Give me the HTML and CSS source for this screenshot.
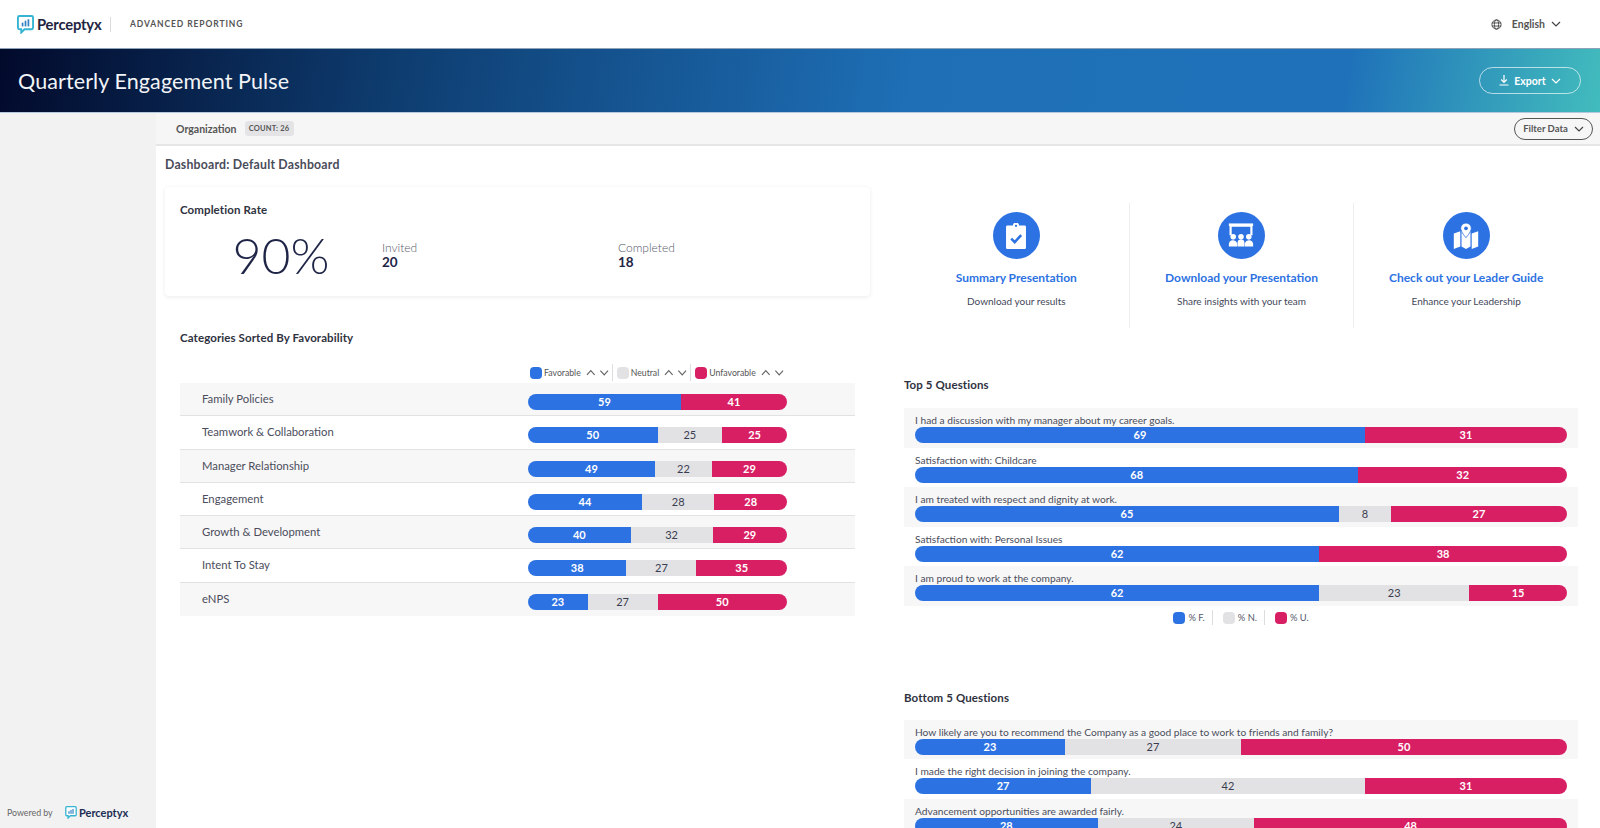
FILE: index.html
```html
<!DOCTYPE html>
<html lang="en">
<head>
<meta charset="utf-8">
<title>Quarterly Engagement Pulse</title>
<link rel="stylesheet" href="styles.css">
</head>
<body>
<header class="topbar">
  <div class="brand">
    <svg class="logo" viewBox="0 0 18 20"><path d="M2.500 1h13A1.500 1.500 0 0 1 17 2.500v11a1.500 1.500 0 0 1-1.500 1.500H8l-3.500 3.500V15h-2A1.500 1.500 0 0 1 1 13.500v-11A1.500 1.500 0 0 1 2.500 1z" fill="#fff" stroke="#35b5d3" stroke-width="2"/><rect x="5" y="8" width="1.800" height="4" fill="#2f7fc1"/><rect x="8.100" y="6" width="1.800" height="6" fill="#2f7fc1"/><rect x="11.200" y="4.500" width="1.800" height="7.500" fill="#2f7fc1"/></svg>
    <span class="brand-name">Perceptyx</span>
  </div>
  <span class="brand-rule"></span>
  <span class="product">ADVANCED REPORTING</span>
  <div class="lang">
    <svg class="globe" viewBox="0 0 12 12" fill="none" stroke="#444" stroke-width="1"><circle cx="6" cy="6" r="5"/><ellipse cx="6" cy="6" rx="2.300" ry="5"/><path d="M1 4.300h10M1 7.700h10"/></svg>
    <span>English</span>
    <svg class="chev" viewBox="0 0 10 6" fill="none" stroke="#444" stroke-width="1.200"><path d="M1 1l4 4 4-4"/></svg>
  </div>
</header>

<section class="banner">
  <h1>Quarterly Engagement Pulse</h1>
  <button class="export">
    <svg class="dl" viewBox="0 0 10 11" fill="none" stroke="#fff" stroke-width="1.200"><path d="M5 0v7M2.200 4.500L5 7.300l2.800-2.800M.5 10h9"/></svg>
    <span>Export</span>
    <svg class="chev" viewBox="0 0 10 6" fill="none" stroke="#fff" stroke-width="1.200"><path d="M1 1l4 4 4-4"/></svg>
  </button>
</section>

<div class="shell">
  <aside class="sidebar">
    <div class="powered">
      <span class="powered-by">Powered by</span>
      <svg class="logo-sm" viewBox="0 0 18 20"><path d="M2.500 1h13A1.500 1.500 0 0 1 17 2.500v11a1.500 1.500 0 0 1-1.500 1.500H8l-3.500 3.500V15h-2A1.500 1.500 0 0 1 1 13.500v-11A1.500 1.500 0 0 1 2.500 1z" fill="#fff" stroke="#35b5d3" stroke-width="2"/><rect x="5" y="8" width="1.800" height="4" fill="#2f7fc1"/><rect x="8.100" y="6" width="1.800" height="6" fill="#2f7fc1"/><rect x="11.200" y="4.500" width="1.800" height="7.500" fill="#2f7fc1"/></svg>
      <span class="powered-name">Perceptyx</span>
    </div>
  </aside>

  <main class="content">
    <div class="subbar">
      <span class="org">Organization</span>
      <span class="count">COUNT: 26</span>
      <button class="filter">
        <span>Filter Data</span>
        <svg class="chev" viewBox="0 0 10 6" fill="none" stroke="#444" stroke-width="1.200"><path d="M1 1l4 4 4-4"/></svg>
      </button>
    </div>

    <div class="dash">
      <div class="col-left">
        <h2 class="dash-title">Dashboard: Default Dashboard</h2>

        <section class="card">
          <h3 class="heading">Completion Rate</h3>
          <div class="rate">
            <div class="big">90%</div>
            <div class="stat"><span>Invited</span><strong>20</strong></div>
            <div class="stat"><span>Completed</span><strong>18</strong></div>
          </div>
        </section>

        <section class="cats">
          <h3 class="heading">Categories Sorted By Favorability</h3>
          <div class="sortbar">
            <i class="sw fav"></i><span class="sort-label">Favorable</span>
            <svg class="arrows" viewBox="0 0 24 7" fill="none" stroke="#666" stroke-width="1.200"><path d="M1 6l4-4.500L9 6M15 1.500L19 6l4-4.500"/></svg>
            <i class="sort-rule"></i>
            <i class="sw neu"></i><span class="sort-label">Neutral</span>
            <svg class="arrows" viewBox="0 0 24 7" fill="none" stroke="#666" stroke-width="1.200"><path d="M1 6l4-4.500L9 6M15 1.500L19 6l4-4.500"/></svg>
            <i class="sort-rule"></i>
            <i class="sw unf"></i><span class="sort-label">Unfavorable</span>
            <svg class="arrows" viewBox="0 0 24 7" fill="none" stroke="#666" stroke-width="1.200"><path d="M1 6l4-4.500L9 6M15 1.500L19 6l4-4.500"/></svg>
          </div>
          <div class="cat-row"><span class="cat-name">Family Policies</span><div class="bar cat-bar"><b class="fav" style="flex-grow:59">59</b><b class="unf" style="flex-grow:41">41</b></div></div>
          <div class="cat-row"><span class="cat-name">Teamwork &amp; Collaboration</span><div class="bar cat-bar"><b class="fav" style="flex-grow:50">50</b><b class="neu" style="flex-grow:25">25</b><b class="unf" style="flex-grow:25">25</b></div></div>
          <div class="cat-row"><span class="cat-name">Manager Relationship</span><div class="bar cat-bar"><b class="fav" style="flex-grow:49">49</b><b class="neu" style="flex-grow:22">22</b><b class="unf" style="flex-grow:29">29</b></div></div>
          <div class="cat-row"><span class="cat-name">Engagement</span><div class="bar cat-bar"><b class="fav" style="flex-grow:44">44</b><b class="neu" style="flex-grow:28">28</b><b class="unf" style="flex-grow:28">28</b></div></div>
          <div class="cat-row"><span class="cat-name">Growth &amp; Development</span><div class="bar cat-bar"><b class="fav" style="flex-grow:40">40</b><b class="neu" style="flex-grow:32">32</b><b class="unf" style="flex-grow:29">29</b></div></div>
          <div class="cat-row"><span class="cat-name">Intent To Stay</span><div class="bar cat-bar"><b class="fav" style="flex-grow:38">38</b><b class="neu" style="flex-grow:27">27</b><b class="unf" style="flex-grow:35">35</b></div></div>
          <div class="cat-row"><span class="cat-name">eNPS</span><div class="bar cat-bar"><b class="fav" style="flex-grow:23">23</b><b class="neu" style="flex-grow:27">27</b><b class="unf" style="flex-grow:50">50</b></div></div>
        </section>
      </div>

      <div class="col-right">
        <section class="links">
          <a class="link">
            <span class="disc"><svg viewBox="0 0 24 30"><path fill="#fff" d="M2 3h6.500a3.500 3.500 0 0 1 7 0H22a1.500 1.500 0 0 1 1.500 1.500v24A1.500 1.500 0 0 1 22 30H2a1.500 1.500 0 0 1-1.500-1.500v-24A1.500 1.500 0 0 1 2 3z"/><circle cx="12" cy="3.200" r="1.300" fill="#2d72e2"/><path d="M6.500 18l4 4 7.500-8" fill="none" stroke="#2d72e2" stroke-width="3"/></svg></span>
            <span class="link-title">Summary Presentation</span>
            <span class="link-sub">Download your results</span>
          </a>
          <a class="link">
            <span class="disc"><svg viewBox="0 0 30 30"><path d="M3 14V3h24v11" fill="none" stroke="#fff" stroke-width="2.500"/><path d="M1 2h28" stroke="#fff" stroke-width="3"/><g fill="#fff"><circle cx="6" cy="16" r="3.200"/><circle cx="15" cy="16" r="3.200"/><circle cx="24" cy="16" r="3.200"/><path d="M1 27v-3a5 5 0 0 1 9.500-1V27zM11 27v-4a4 4 0 0 1 8 0v4zM19.500 27v-4a5 5 0 0 1 9.500 1v3z"/></g></svg></span>
            <span class="link-title">Download your Presentation</span>
            <span class="link-sub">Share insights with your team</span>
          </a>
          <a class="link">
            <span class="disc"><svg viewBox="0 0 30 32"><path fill="#fff" d="M0 13l8-3v19l-8 3zM22 13l8-3v19l-8 3zM9.500 10l3 1 2.500 7 2.500-7 3-1v19l-5.500 3-5.500-3z"/><path fill="#fff" d="M15 0a6.500 6.500 0 0 1 6.500 6.500C21.500 11 15 18 15 18S8.500 11 8.500 6.500A6.500 6.500 0 0 1 15 0z" stroke="#2d72e2"/><circle cx="15" cy="6.500" r="2.300" fill="#2d72e2"/></svg></span>
            <span class="link-title">Check out your Leader Guide</span>
            <span class="link-sub">Enhance your Leadership</span>
          </a>
        </section>

        <section class="questions">
          <h3 class="heading">Top 5 Questions</h3>
          <div class="q-row"><p>I had a discussion with my manager about my career goals.</p><div class="bar"><b class="fav" style="flex-grow:69">69</b><b class="unf" style="flex-grow:31">31</b></div></div>
          <div class="q-row"><p>Satisfaction with: Childcare</p><div class="bar"><b class="fav" style="flex-grow:68">68</b><b class="unf" style="flex-grow:32">32</b></div></div>
          <div class="q-row"><p>I am treated with respect and dignity at work.</p><div class="bar"><b class="fav" style="flex-grow:65">65</b><b class="neu" style="flex-grow:8">8</b><b class="unf" style="flex-grow:27">27</b></div></div>
          <div class="q-row"><p>Satisfaction with: Personal Issues</p><div class="bar"><b class="fav" style="flex-grow:62">62</b><b class="unf" style="flex-grow:38">38</b></div></div>
          <div class="q-row"><p>I am proud to work at the company.</p><div class="bar"><b class="fav" style="flex-grow:62">62</b><b class="neu" style="flex-grow:23">23</b><b class="unf" style="flex-grow:15">15</b></div></div>
          <div class="q-legend">
            <i class="sw fav"></i><span>% F.</span><i class="q-rule"></i>
            <i class="sw neu"></i><span>% N.</span><i class="q-rule"></i>
            <i class="sw unf"></i><span>% U.</span>
          </div>
        </section>

        <section class="questions bottom">
          <h3 class="heading">Bottom 5 Questions</h3>
          <div class="q-row"><p>How likely are you to recommend the Company as a good place to work to friends and family?</p><div class="bar"><b class="fav" style="flex-grow:23">23</b><b class="neu" style="flex-grow:27">27</b><b class="unf" style="flex-grow:50">50</b></div></div>
          <div class="q-row"><p>I made the right decision in joining the company.</p><div class="bar"><b class="fav" style="flex-grow:27">27</b><b class="neu" style="flex-grow:42">42</b><b class="unf" style="flex-grow:31">31</b></div></div>
          <div class="q-row"><p>Advancement opportunities are awarded fairly.</p><div class="bar"><b class="fav" style="flex-grow:28">28</b><b class="neu" style="flex-grow:24">24</b><b class="unf" style="flex-grow:48">48</b></div></div>
        </section>
      </div>
    </div>
  </main>
</div>
</body>
</html>
```
FILE: styles.css
```css
* { box-sizing: border-box; }
html, body { margin: 0; height: 828px; overflow: hidden; }
body { font-family: "Lato", "Noto Sans", "Liberation Sans", sans-serif; color: #35384a; background: #fff; display: flex; flex-direction: column; }
h1, h2, h3, p { margin: 0; }
button { font: inherit; background: none; cursor: pointer; }
.chev { width: 10px; height: 6px; flex: none; }

.topbar { height: 48px; flex: none; display: flex; align-items: center; padding: 0 39px 0 17px; background: #fff; }
.brand { display: flex; align-items: center; gap: 3px; width: 93px; }
.logo { width: 17px; height: 19px; flex: none; }
.brand-name { font-size: 14.800px; font-weight: 700; color: #1e2440; letter-spacing: -0.2px; }
.brand-rule { width: 1px; height: 15px; background: #dcdcdc; }
.product { margin-left: 19px; font-size: 8.500px; font-weight: 700; letter-spacing: 0.9px; color: #555; }
.lang { margin-left: auto; display: flex; align-items: center; font-size: 10.500px; font-weight: 700; color: #555; }
.globe { width: 11px; height: 11px; margin-right: 10px; }
.lang .chev { margin-left: 6px; }

.banner { height: 65px; flex: none; display: flex; align-items: center; justify-content: space-between; padding: 0 19px 0 18px; background: linear-gradient(100deg, #020a2b 0%, #0e3d70 25%, #14518c 37%, #1e6fb6 57%, #1f72b9 84%, #42bcbd 100%); border-top: 1px solid #8fa3b8; border-bottom: 1px solid #b5c9dc; }
.banner h1 { font-size: 21.500px; font-weight: 400; color: #f2f4f7; letter-spacing: 0.1px; }
.export { width: 102px; height: 27px; display: flex; align-items: center; justify-content: center; gap: 5px; border: 1px solid rgba(255,255,255,.65); border-radius: 14px; color: #fff; font-size: 10.500px; font-weight: 700; }
.dl { width: 10px; height: 11px; }

.shell { flex: 1; min-height: 0; display: flex; }
.sidebar { width: 156px; flex: none; background: #f2f2f3; display: flex; align-items: flex-end; padding: 0 0 9px 7px; }
.powered { display: flex; align-items: center; }
.powered-by { font-size: 8.800px; color: #666; width: 58px; }
.logo-sm { width: 12px; height: 13px; margin-right: 2px; }
.powered-name { font-size: 11px; font-weight: 700; color: #1b2d52; }

.content { flex: 1; min-width: 0; display: flex; flex-direction: column; overflow: hidden; }
.subbar { height: 33px; flex: none; display: flex; align-items: center; padding: 0 7px 0 20px; background: #f6f6f6; border-bottom: 2px solid #e6e6e6; }
.org { font-size: 10.500px; font-weight: 700; color: #555; }
.count { margin-left: 8px; height: 15px; width: 49px; display: flex; align-items: center; justify-content: center; background: #e4e4e7; border-radius: 3px; font-size: 7.500px; font-weight: 700; color: #555; letter-spacing: 0.2px; }
.filter { margin-left: auto; width: 79px; height: 22px; display: flex; align-items: center; justify-content: center; gap: 6px; border: 1px solid #555; border-radius: 11px; font-size: 9.500px; font-weight: 700; color: #555; padding: 0; }

.dash { flex: 1; min-height: 0; display: grid; grid-template-columns: 705px 674px; column-gap: 34px; padding-left: 9px; overflow: hidden; }
.col-left { padding-top: 10px; }
.dash-title { font-size: 12.300px; font-weight: 700; color: #4a4c5a; line-height: 18px; letter-spacing: 0.2px; margin-bottom: 13px; }
.heading { font-size: 11.500px; font-weight: 700; color: #2f3240; line-height: 16px; letter-spacing: 0.1px; }

.card { height: 109px; padding: 15px 15px 0; border-radius: 4px; box-shadow: 0 1px 4px rgba(30,35,60,.09); }
.rate { display: flex; align-items: center; margin-top: 9px; }
.big { width: 202px; text-align: center; font-size: 50px; font-weight: 300; color: #1f2547; line-height: 56px; }
.stat { width: 236px; display: flex; flex-direction: column; font-size: 12px; color: #55586a; line-height: 14px; font-weight: 300; }
.stat strong { font-size: 13.500px; color: #1f2547; font-weight: 700; }

.cats { margin: 34px 15px 0; }
.sortbar { display: flex; align-items: center; height: 17px; margin: 18px 0 0 350px; font-size: 8.700px; color: #555; }
.sw { width: 12px; height: 12px; border-radius: 4px; flex: none; }
.sort-label { margin-left: 2px; }
.arrows { width: 23px; height: 7px; margin-left: 5px; flex: none; }
.sort-rule { width: 1px; height: 17px; background: #ddd; margin: 0 4px 0 3px; }
.fav { background: #2d72e2; color: #fff; }
.neu { background: #e2e2e4; color: #3a3d50; }
.unf { background: #d81f64; color: #fff; }

.cat-row { height: 33.250px; display: flex; padding-left: 22px; border-bottom: 1px solid #e2e2e2; }
.cats .sortbar + .cat-row { margin-top: 2px; }
.cat-row:nth-child(odd) { background: #f7f7f7; }
.cat-row:last-child { border-bottom: 0; }
.cat-name { width: 326px; font-size: 11.300px; line-height: 32px; color: #4b4d5c; }
.cat-bar { width: 259px; margin-top: 11px; }

.bar { display: flex; height: 16px; border-radius: 8px; overflow: hidden; }
.bar b { flex: 1 1 0; min-width: 0; text-align: center; font-size: 11px; font-weight: 700; line-height: 16px; }
.bar .neu { font-weight: 400; }

.links { height: 125px; margin-top: 57px; display: grid; grid-template-columns: repeat(3, 1fr); }
.link { display: flex; flex-direction: column; align-items: center; padding-top: 9px; border-left: 1px solid #eeeeee; }
.link:first-child { border-left: 0; }
.disc { width: 47px; height: 47px; border-radius: 50%; background: #2d72e2; display: flex; align-items: center; justify-content: center; }
.disc svg { width: 26px; height: 26px; }
.link-title { margin-top: 11px; font-size: 12px; font-weight: 700; color: #2d72e2; line-height: 16px; white-space: nowrap; }
.link-sub { margin-top: 7px; font-size: 10px; color: #44475a; line-height: 16px; }

.questions { margin-top: 49px; }
.questions .heading { margin-bottom: 15px; }
.questions.bottom { margin-top: 0; padding-top: 66px; }
.questions.bottom .heading { margin-bottom: 14px; }
.q-row { height: 39.500px; padding: 5px 11px 0 11px; }
.q-row:nth-of-type(odd) { background: #f7f7f7; }
.q-row p { font-size: 10.200px; line-height: 14px; color: #4b4d5c; white-space: nowrap; }
.q-legend { display: flex; align-items: center; justify-content: center; height: 12px; margin-top: 6px; font-size: 9.300px; color: #55586a; }
.q-legend span { margin-left: 3px; }
.q-rule { width: 1px; height: 15px; background: #ddd; margin: 0 10px 0 7px; }
```
